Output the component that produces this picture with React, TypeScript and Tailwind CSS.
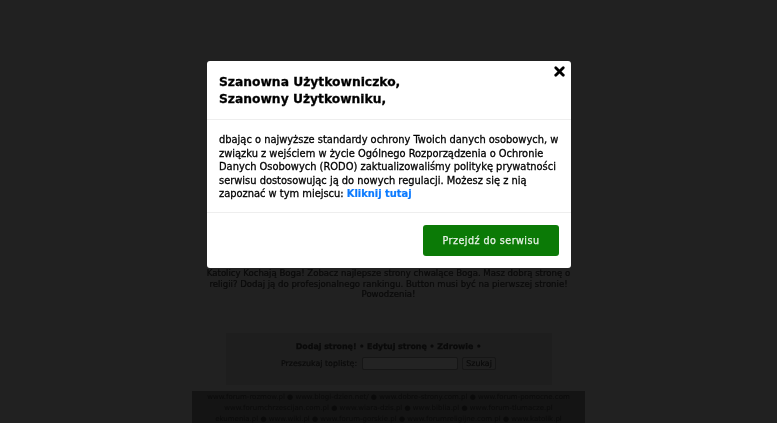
import { X } from "lucide-react"

const footerLines = [
  ["www.forum-rozmow.pl", "www.blogi-dzien.net/", "www.dobre-strony.com.pl", "www.forum-pomocne.com"],
  ["www.forumchrzescijan.com.pl", "www.wiara-dzis.pl", "www.biblia.pl", "www.forum-tlumacze.pl"],
  ["ekumenia.pl", "www.wiki.pl", "www.forum-gorskie.pl", "www.forumreligijne.com.pl", "www.katolik.pl"],
]

function Modal() {
  return (
    <div className="absolute left-[207px] top-[61px] flex h-[207px] w-[364px] flex-col rounded-[3px] bg-white text-black">
      <button type="button" className="absolute right-[4px] top-[3px] text-black">
        <X className="h-[15px] w-[15px]" strokeWidth={4.5} />
      </button>
      <div className="h-[59px] border-b border-[#eeeeee] px-3 pt-[13px] text-[12.3px] font-bold leading-[17px] [-webkit-text-stroke:0.3px_black] blur-[0.3px]">
        Szanowna Użytkowniczko,
        <br />
        Szanowny Użytkowniku,
      </div>
      <div className="h-[93px] border-b border-[#eeeeee] pl-3 pr-[10px] pt-[13px] text-[9.9px] leading-[13.6px] [-webkit-text-stroke:0.3px_black] blur-[0.3px]">
        dbając o najwyższe standardy ochrony Twoich danych osobowych, w związku z wejściem w życie Ogólnego Rozporządzenia o Ochronie Danych Osobowych (RODO) zaktualizowaliśmy politykę prywatności serwisu dostosowując ją do nowych regulacji. Możesz się z nią zapoznać w tym miejscu:{" "}
        <a className="cursor-pointer font-bold text-[#0d7bff] [-webkit-text-stroke:0.2px_#0d7bff]">Kliknij tutaj</a>
      </div>
      <div className="flex flex-1 justify-end px-3 pt-[12px]">
        <button type="button" className="h-[31px] w-[136px] rounded-[3px] bg-[#0b7a06] pt-[1px] text-[9.6px] tracking-[0.45px] text-[#e8f3e7] [-webkit-text-stroke:0.25px_#e8f3e7] blur-[0.2px]">
          Przejdź do serwisu
        </button>
      </div>
    </div>
  )
}

export default function App() {
  return (
    <div className="relative h-[423px] w-[777px] overflow-hidden bg-[#212121] font-['DejaVu_Sans',sans-serif] text-[#0a0a0a]">
      <div className="flex flex-col items-center pt-[268px] blur-[0.4px]">
        <p className="h-[32px] w-[370px] text-center text-[8.55px] leading-[10.5px] [-webkit-text-stroke:0.2px_#0a0a0a]">
          Katolicy Kochają Boga! Zobacz najlepsze strony chwalące Boga. Masz dobrą stronę o religii? Dodaj ją do profesjonalnego rankingu. Button musi być na pierwszej stronie! Powodzenia!
        </p>
        <div className="mt-[33px] flex h-[52px] w-[326px] flex-col items-center bg-[#1e1e1e] pt-[8px]">
          <div className="text-[7.9px] font-bold leading-[12px] [-webkit-text-stroke:0.25px_#0a0a0a]">Dodaj stronę! • Edytuj stronę • Zdrowie •</div>
          <div className="mt-[4px] flex items-center gap-[4px] text-[7.9px] text-[#0a0a0a] [-webkit-text-stroke:0.15px_#0a0a0a]">
            <span>Przeszukaj toplistę:</span>
            <span className="ml-[1px] h-[13px] w-[96px] rounded-[2px] border border-[#161616] bg-[#232323]" />
            <button type="button" className="h-[13px] w-[34px] rounded-[2px] border border-[#161616] bg-[#1f1f1f] text-[7.9px] leading-[10px]">
              Szukaj
            </button>
          </div>
        </div>
        <div className="mt-[6px] h-[40px] w-[393px] overflow-hidden bg-[#141414] px-[5px] pt-[1px] text-center text-[7px] leading-[11px] text-[#0a0a0a]">
          {footerLines.map((line, i) => (
            <div key={i} className="whitespace-nowrap">
              {line.join(" ● ")}
            </div>
          ))}
        </div>
      </div>
      <Modal />
    </div>
  )
}
